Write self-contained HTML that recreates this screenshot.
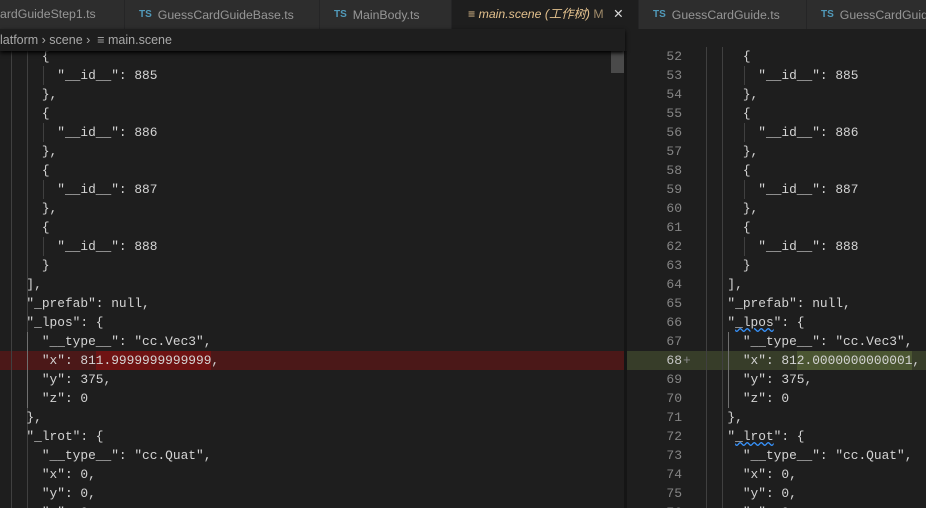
<!DOCTYPE html>
<html><head><meta charset="utf-8"><style>
*{margin:0;padding:0;box-sizing:border-box}
html,body{width:926px;height:508px;overflow:hidden}
body{background:#1e1e1e;position:relative;font-family:"Liberation Sans","Noto Sans CJK SC",sans-serif}
.tabs{position:absolute;left:0;top:0;width:926px;height:29px;background:#252526}
.tab{position:absolute;top:0;height:29px;background:#2d2d2d;color:#969696;font-size:12.3px;line-height:29px;white-space:nowrap;overflow:hidden;border-right:1px solid #252526}
.ts{color:#519aba;font-weight:bold;font-size:10px;margin-right:6px;vertical-align:2px}
.bc{position:absolute;top:29px;left:0;width:926px;height:22px;background:#1e1e1e;color:#a9a9a9;font-size:12.5px;line-height:22px;box-shadow:0 2px 4px #000;z-index:2}
.code{position:absolute;font-family:"Liberation Mono",monospace;font-size:12.85px;color:#d4d4d4;white-space:pre;line-height:19px;height:461px;overflow:hidden}
.ln{position:absolute;font-family:"Liberation Mono",monospace;font-size:13px;color:#858585;text-align:right;width:57px;left:625px;line-height:19px;white-space:pre;height:461px;overflow:hidden}
.g{position:absolute;width:1px;background:#404040}
</style></head><body>
<div class="tabs">
<div class="tab" style="left:0;width:125px;padding-left:0">ardGuideStep1.ts</div>
<div class="tab" style="left:125px;width:195px;padding-left:14px"><span class="ts">TS</span>GuessCardGuideBase.ts</div>
<div class="tab" style="left:320px;width:132px;padding-left:14px"><span class="ts">TS</span>MainBody.ts</div>
<div class="tab" style="left:452px;width:187px;padding-left:16px;background:#1e1e1e;color:#e2c08d;font-style:italic">≡ main.scene (工作树) <span style="color:#a08b6a;font-style:normal">M</span> <span style="color:#ddd;font-style:normal;margin-left:6px">✕</span></div>
<div class="tab" style="left:639px;width:168px;padding-left:14px"><span class="ts">TS</span>GuessCardGuide.ts</div>
<div class="tab" style="left:807px;width:130px;padding-left:14px"><span class="ts">TS</span>GuessCardGuide</div>
</div>
<div class="bc" style="width:625px">latform › scene › &nbsp;≡ main.scene</div>
<div style="position:absolute;left:0;top:351px;width:625px;height:19px;background:#4b1818"></div>
<div style="position:absolute;left:96px;top:351px;width:115px;height:19px;background:#6f1313"></div>
<div style="position:absolute;left:625px;top:351px;width:301px;height:19px;background:#373d29"></div>
<div style="position:absolute;left:797px;top:351px;width:115px;height:19px;background:#4b5632"></div>
<div style="position:absolute;left:624px;top:51px;width:3px;height:457px;background:#151515"></div>
<div style="position:absolute;left:611px;top:51px;width:13px;height:22px;background:#4a4a4a"></div>
<div class="g" style="left:11px;top:47px;height:461px"></div>
<div class="g" style="left:27px;top:47px;height:461px"></div>
<div class="g" style="left:43px;top:66px;height:19px"></div><div class="g" style="left:43px;top:123px;height:19px"></div><div class="g" style="left:43px;top:180px;height:19px"></div><div class="g" style="left:43px;top:237px;height:19px"></div><div class="g" style="left:27px;top:332px;height:76px;background:#707070"></div>
<div class="g" style="left:706px;top:47px;height:461px"></div>
<div class="g" style="left:722px;top:47px;height:461px"></div>
<div class="g" style="left:744px;top:66px;height:19px"></div><div class="g" style="left:744px;top:123px;height:19px"></div><div class="g" style="left:744px;top:180px;height:19px"></div><div class="g" style="left:744px;top:237px;height:19px"></div><div class="g" style="left:728px;top:332px;height:76px;background:#707070"></div>
<div class="code" style="left:11px;top:47px">    {
      "__id__": 885
    },
    {
      "__id__": 886
    },
    {
      "__id__": 887
    },
    {
      "__id__": 888
    }
  ],
  "_prefab": null,
  "_lpos": {
    "__type__": "cc.Vec3",
    "x": 811.9999999999999,
    "y": 375,
    "z": 0
  },
  "_lrot": {
    "__type__": "cc.Quat",
    "x": 0,
    "y": 0,
    "z": 0,</div>
<div class="code" style="left:712px;top:47px">    {
      "__id__": 885
    },
    {
      "__id__": 886
    },
    {
      "__id__": 887
    },
    {
      "__id__": 888
    }
  ],
  "_prefab": null,
  "<span style="text-decoration:underline wavy #3794ff">_lpos</span>": {
    "__type__": "cc.Vec3",
    "x": 812.0000000000001,
    "y": 375,
    "z": 0
  },
  "<span style="text-decoration:underline wavy #3794ff">_lrot</span>": {
    "__type__": "cc.Quat",
    "x": 0,
    "y": 0,
    "z": 0,</div>
<div class="ln" style="top:47px">52
53
54
55
56
57
58
59
60
61
62
63
64
65
66
67
<span style="color:#c6c6c6">68</span>
69
70
71
72
73
74
75
76</div>
<div class="code" style="left:683px;top:351px;color:#8a8a8a;height:19px">+</div>
</body></html>
